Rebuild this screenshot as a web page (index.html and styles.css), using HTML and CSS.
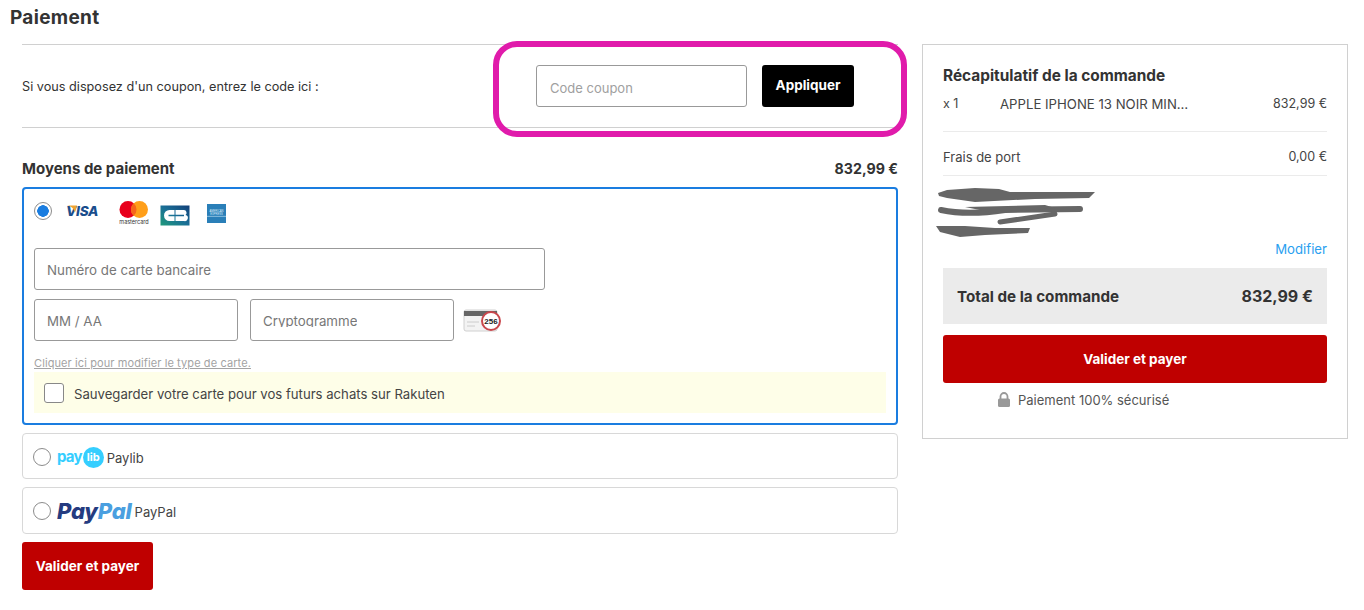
FILE: index.html
```html
<!DOCTYPE html>
<html lang="fr">
<head>
<meta charset="utf-8">
<title>Paiement</title>
<link rel="stylesheet" href="styles.css">
</head>
<body>
<div class="page">
  <h1 class="title">Paiement</h1>
  <div class="columns">
    <main class="left">
      <section class="coupon">
        <p class="coupon-text">Si vous disposez d'un coupon, entrez le code ici :</p>
        <div class="coupon-form">
          <label class="field field-coupon"><span>Code coupon</span></label>
          <button class="btn btn-black">Appliquer</button>
        </div>
      </section>
      <div class="pay-head"><span>Moyens de paiement</span><span class="pay-amount">832,99 €</span></div>

      <section class="method method-active">
        <div class="logos">
          <span class="radio radio-on"></span>
          <span class="visa"><svg class="visa-tick" width="12" height="10" viewBox="0 0 12 10"><path d="M0 1.5C5 1.5 8 3 10 8.5L12 1.500Z" fill="#f0a431"/></svg>VISA</span>
          <svg class="mc" width="30" height="26" viewBox="0 0 30 26">
            <circle cx="9" cy="9.500" r="8.500" fill="#e8001c"/>
            <circle cx="20.500" cy="9.500" r="8.500" fill="#ff9f1a"/>
            <path d="M14.750 3.200a8.500 8.500 0 0 1 0 12.600a8.500 8.500 0 0 1 0-12.600Z" fill="#f6651b"/>
            <text x="15" y="23.500" text-anchor="middle" class="mc-text">mastercard</text>
          </svg>
          <svg class="cb" width="30" height="21" viewBox="0 0 30 21">
            <defs><linearGradient id="cbg" x1="0" y1="1" x2="1" y2="0"><stop offset="0" stop-color="#1f9a7a"/><stop offset="0.5" stop-color="#1a6f96"/><stop offset="1" stop-color="#123f78"/></linearGradient></defs>
            <rect x="0.500" y="0.500" width="29" height="20" fill="url(#cbg)"/>
            <path d="M14.500 5H9.500a5.500 5.500 0 0 0 0 11H14.500V11.300H8.500V9.700H14.500Z" fill="#fff"/>
            <path d="M15.500 5H24a2.800 2.800 0 0 1 1.500 5a2.800 2.800 0 0 1-1.500 6H15.500V11.300H24V9.700H15.500Z" fill="#fff"/>
          </svg>
          <svg class="amex" width="19" height="19" viewBox="0 0 20 20">
            <rect width="20" height="20" fill="#2a7fb8"/>
            <text x="10" y="8" text-anchor="middle" class="amex-text">AMERICAN</text>
            <text x="10" y="11.500" text-anchor="middle" class="amex-text">EXPRESS</text>
            <path d="M0 13H20" stroke="#8fc3e2" stroke-width="1"/>
          </svg>
        </div>
        <label class="field field-card"><span>Numéro de carte bancaire</span></label>
        <div class="card-row">
          <label class="field field-half"><span>MM / AA</span></label>
          <label class="field field-half"><span class="clip">Cryptogramme</span></label>
          <svg class="cvv" width="40" height="26" viewBox="0 0 40 26">
            <rect x="1" y="2" width="33" height="21" rx="2" fill="#f3f3f3" stroke="#d0d0d0"/>
            <rect x="1" y="3" width="33" height="5" fill="#666"/>
            <path d="M4 14H16M4 18H12" stroke="#ccc"/>
            <circle cx="28" cy="13" r="9" fill="#fff" stroke="#c9474c" stroke-width="2"/>
            <text x="28" y="16" text-anchor="middle" class="cvv-text">256</text>
          </svg>
        </div>
        <a class="change-link">Cliquer ici pour modifier le type de carte.</a>
        <div class="save">
          <span class="checkbox"></span>
          <span class="save-text">Sauvegarder votre carte pour vos futurs achats sur Rakuten</span>
        </div>
      </section>

      <section class="method method-paylib">
        <span class="radio"></span>
        <span class="paylib-logo">pay<span class="paylib-circle">lib</span></span>
        <span class="method-name">Paylib</span>
      </section>

      <section class="method method-paypal">
        <span class="radio"></span>
        <span class="paypal-logo"><span class="pp-dark">Pay</span><span class="pp-light">Pal</span></span>
        <span class="method-name">PayPal</span>
      </section>

      <button class="btn btn-red btn-left">Valider et payer</button>
    </main>

    <aside class="summary">
      <h2 class="summary-title">Récapitulatif de la commande</h2>
      <div class="line line-item">
        <span class="qty">x 1</span>
        <span class="product">APPLE IPHONE 13 NOIR MIN…</span>
        <span class="price">832,99 €</span>
      </div>
      <div class="line line-ship">
        <span>Frais de port</span>
        <span class="price">0,00 €</span>
      </div>
      <svg class="scribble" width="170" height="56" viewBox="0 0 170 56">
        <path d="M3 10L12 7L40 5L64 6L75 9L160 9L154 15L100 16L40 19L12 15L4 13Z" fill="#666"/>
        <path d="M6 27C25 31 50 30 70 27L145 26" fill="none" stroke="#666" stroke-width="6" stroke-linecap="round"/>
        <path d="M30 24L110 22L120 25L60 30Z" fill="#666"/>
        <path d="M65 39L120 31" fill="none" stroke="#666" stroke-width="5" stroke-linecap="round"/>
        <path d="M1 43L30 43L60 45L95 45L93 50L50 52L25 54L5 49Z" fill="#666"/>
      </svg>
      <a class="modify">Modifier</a>
      <div class="total"><span>Total de la commande</span><span class="total-price">832,99 €</span></div>
      <button class="btn btn-red btn-full">Valider et payer</button>
      <div class="secure">
        <svg width="14" height="16" viewBox="0 0 14 16"><path d="M3.500 7V4.500a3.500 3.500 0 0 1 7 0V7" fill="none" stroke="#999" stroke-width="1.800"/><rect x="1" y="6.500" width="12" height="8.500" rx="1.500" fill="#999"/></svg>
        <span>Paiement 100% sécurisé</span>
      </div>
    </aside>
  </div>
  <div class="highlight"></div>
</div>
</body>
</html>
```
FILE: styles.css
```css
* { box-sizing: border-box; }
html, body { margin: 0; background: #fff; }
body { font-family: Inter, "Liberation Sans", sans-serif; font-size: 13px; color: #333; overflow: hidden; height: 610px; }
.page { position: relative; width: 1364px; height: 610px; }
.title { margin: 0; padding: 7px 0 0 10px; height: 44px; font-size: 19px; line-height: 21px; font-weight: 700; letter-spacing: 0.300px; color: #333; }
.columns { display: flex; gap: 24px; padding-left: 22px; }
.left { width: 876px; flex: none; }
.coupon { display: flex; justify-content: space-between; align-items: center; height: 84px; border-top: 1px solid #d0d0d0; border-bottom: 1px solid #d0d0d0; padding-right: 44px; }
.coupon-text { margin: 0; font-size: 12.700px; color: #333; }
.coupon-form { display: flex; gap: 15px; }
.field { display: flex; align-items: center; height: 42px; border: 1px solid #999; border-radius: 3px; padding: 2px 0 0 12px; font-size: 13.300px; color: #777; background: #fff; }
.field-coupon { width: 211px; padding: 3px 0 0 13px; font-size: 13px; color: #a0a0a0; }
.field-card { width: 511px; margin-top: 23px; }
.card-row { display: flex; align-items: center; gap: 12px; margin-top: 9px; }
.field-half { width: 204px; }
.clip { display: block; height: 12px; line-height: 13px; overflow: hidden; }
.cvv { margin: 2px 0 0 -3px; }
.btn { display: block; border: 0; border-radius: 3px; color: #fff; font-family: inherit; font-size: 13.500px; font-weight: 700; padding: 0; }
.btn-black { width: 92px; height: 42px; background: #000; padding-bottom: 2px; }
.btn-red { background: #bf0000; height: 48px; }
.btn-left { width: 131px; margin-top: 8px; }
.btn-full { width: 100%; margin-top: 11px; }
.pay-head { display: flex; justify-content: space-between; align-items: center; height: 22px; margin: 29px 0 8px; font-size: 15px; font-weight: 700; color: #333; }
.pay-amount { font-size: 14.200px; }
.method { border: 1px solid #d8d8d8; border-radius: 4px; display: flex; align-items: center; padding-left: 10px; }
.method-active { display: block; height: 238px; border: 2px solid #1a7de0; padding: 10px 10px 0 10px; margin-bottom: 8px; }
.method-paylib { height: 46px; margin-bottom: 8px; padding-top: 2px; }
.method-paypal { height: 47px; }
.radio { flex: none; display: inline-block; width: 18px; height: 18px; border-radius: 50%; border: 1px solid #8c8c8c; background: #fff; }
.radio-on { border-color: #8c8c8c; background: radial-gradient(circle, #1a7de0 0, #1a7de0 5.500px, #fff 6px); }
.logos { display: flex; align-items: flex-start; height: 26px; }
.logos .radio { margin-top: 3px; }
.visa { position: relative; margin-left: 14px; margin-top: 4px; font-size: 13.500px; font-style: italic; font-weight: 800; line-height: 16px; color: #1a4d8c; letter-spacing: -0.300px; width: 34px; }
.visa-tick { position: absolute; left: -1px; top: 1px; }
.mc { margin-left: 19px; margin-top: 1px; }
.mc-text { font-size: 5.500px; fill: #333; font-family: Inter, sans-serif; }
.cb { margin-left: 11px; margin-top: 6px; }
.amex { margin-left: 17px; margin-top: 5px; }
.amex-text { font-size: 2.800px; fill: #dff0fa; font-family: "Liberation Sans", sans-serif; }
.cvv-text { font-size: 8px; font-weight: 700; fill: #222; font-family: "Liberation Sans", sans-serif; }
.change-link { display: block; margin-top: 15px; font-size: 11px; line-height: 14px; color: #a3a3a3; text-decoration: underline; letter-spacing: 0.100px; }
.save { display: flex; align-items: center; gap: 10px; height: 41px; margin-top: 2px; padding-left: 10px; background: #fefee8; font-size: 13.150px; color: #444; }
.save-text { padding-top: 3px; }
.checkbox { width: 20px; height: 20px; border: 1px solid #888; border-radius: 3px; background: #fff; }
.paylib-logo { display: inline-flex; align-items: center; margin-left: 6px; font-size: 15px; font-weight: 700; line-height: 20px; color: #35ceff; letter-spacing: -0.800px; }
.paylib-circle { display: inline-block; width: 21px; height: 21px; margin-left: 1px; border-radius: 50%; background: #35ceff; color: #fff; font-size: 11px; line-height: 20px; text-align: center; letter-spacing: 0; }
.paypal-logo { margin-left: 6px; font-size: 22px; font-weight: 800; font-style: italic; line-height: 24px; letter-spacing: -0.200px; }
.pp-dark { color: #253b80; }
.pp-light { color: #4a9fe0; }
.method-name { margin-left: 3px; padding-top: 2px; font-size: 13px; color: #444; }
.summary { width: 426px; height: 395px; flex: none; border: 1px solid #d0d0d0; padding: 0 20px; }
.summary-title { margin: 21px 0 0; font-size: 15.400px; line-height: 20px; font-weight: 700; color: #333; }
.line { display: flex; justify-content: space-between; font-size: 13px; color: #444; }
.price { font-size: 12.500px; }
.line-item { height: 36px; margin-top: 10px; line-height: 16px; border-bottom: 1px solid #ebebeb; }
.qty { width: 57px; flex: none; font-size: 12.500px; }
.product { flex: 1; font-size: 13.200px; }
.line-ship { height: 44px; padding-top: 6px; align-items: center; border-bottom: 1px solid #ebebeb; }
.scribble { display: block; margin: 7px 0 0 -8px; }
.modify { display: block; margin-top: 1px; text-align: right; font-size: 13.200px; line-height: 18px; color: #2aa0f0; }
.total { display: flex; justify-content: space-between; align-items: center; height: 56px; margin-top: 10px; padding: 0 14px; background: #ebebeb; font-size: 15.200px; font-weight: 700; color: #333; }
.total-price { font-size: 16px; }
.secure { display: flex; align-items: center; gap: 7px; margin-top: 9px; padding-left: 54px; font-size: 13px; color: #555; }
.highlight { position: absolute; left: 493px; top: 41px; width: 414px; height: 96px; border: 6px solid #e01bab; border-radius: 24px; pointer-events: none; }
```
